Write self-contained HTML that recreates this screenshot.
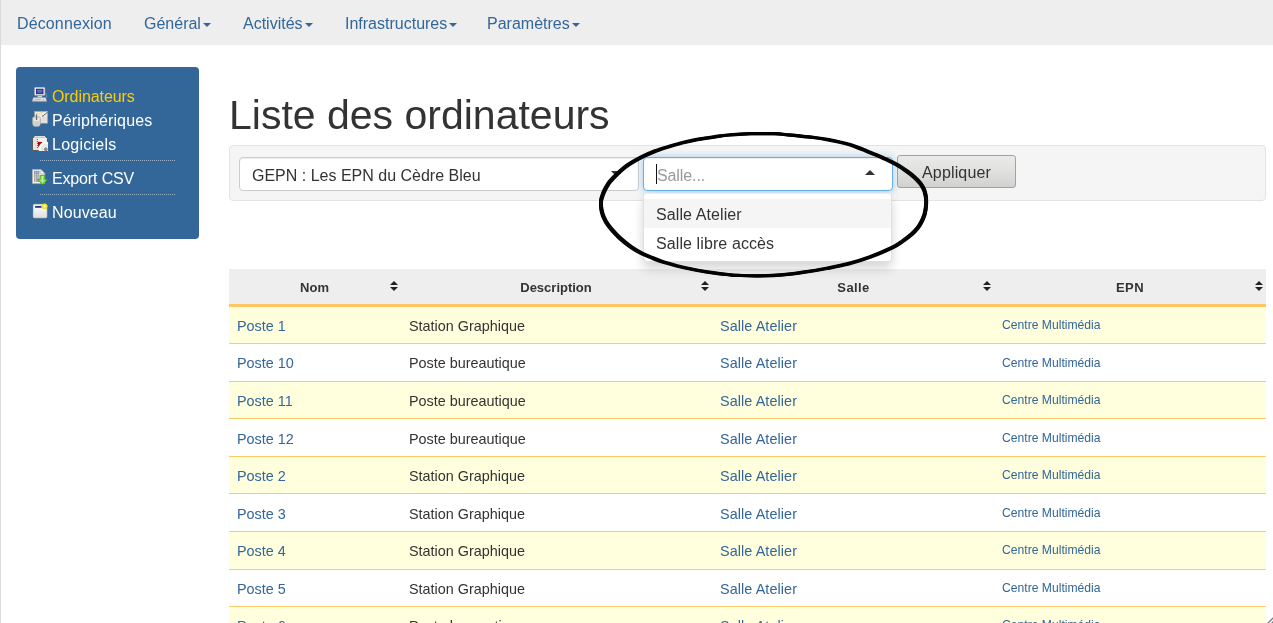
<!DOCTYPE html>
<html lang="fr">
<head>
<meta charset="utf-8">
<title>Liste des ordinateurs</title>
<style>
*{box-sizing:border-box}
html,body{margin:0;padding:0}
body{width:1273px;height:623px;overflow:hidden;position:relative;background:#fff;opacity:.999;
 font-family:"Liberation Sans",Arial,Helvetica,sans-serif;font-size:14px;color:#333}
a{text-decoration:none;color:#336699}
.edge{position:absolute;left:0;top:0;width:1px;height:623px;background:#dadada}
/* navbar */
.nav{position:absolute;left:1px;top:0;width:1272px;height:45px;background:#eee}
.nav a{position:absolute;top:14px;will-change:transform;font-size:16px;line-height:20px;color:#336699;white-space:nowrap}
.caret{display:inline-block;width:0;height:0;margin-left:2px;vertical-align:middle;
 border-top:4px solid #336699;border-left:4px solid transparent;border-right:4px solid transparent}
/* sidebar */
.side{position:absolute;left:16px;top:67px;width:183px;height:172px;background:#336699;border-radius:4px}
.side .it{position:absolute;left:36px;font-size:16px;line-height:20px;color:#fff;white-space:nowrap}
.side .it.on{color:#ffcc00}
.side .sep{position:absolute;left:24px;width:135px;height:0;border-top:1px dotted #9ab3cc}
.side svg{position:absolute;left:16px}
/* heading */
h1{position:absolute;left:229px;top:91px;margin:0;font-size:41px;line-height:48px;font-weight:normal;color:#333;white-space:nowrap}
/* filter well */
.well{position:absolute;left:229px;top:145px;width:1037px;height:56px;background:#f5f5f5;border:1px solid #e3e3e3;border-radius:4px}
.sel1{position:absolute;left:239px;top:157px;width:400px;height:34px;background:#fff;border:1px solid #ccc;border-radius:4px;box-shadow:inset 0 1px 1px rgba(0,0,0,.075);
 font-size:16px;line-height:32px;padding:2px 0 0 12px;color:#333;white-space:nowrap}
.sel2{position:absolute;left:643px;top:157px;width:250px;height:34px;background:#fff;border:1px solid #66afe9;border-radius:4px;
 box-shadow:inset 0 1px 1px rgba(0,0,0,.075),0 0 8px rgba(102,175,233,.6);font-size:16px;line-height:32px;padding:2px 0 0 13px;letter-spacing:-.1px;color:#999;white-space:nowrap}
.btn{position:absolute;left:897px;top:155px;width:119px;height:33px;border:1px solid #a3a29c;border-radius:3px;
 background:linear-gradient(#eaeae8,#e0e0de 50%,#d1d1cf);letter-spacing:.15px;font-size:16px;line-height:31px;padding:1px 0 0 0;text-align:center;color:#333}
.drop{position:absolute;left:643px;top:193px;width:249px;height:69px;background:#fff;border:1px solid rgba(0,0,0,.12);border-top:1px solid #eee;border-radius:4px;
 box-shadow:0 6px 12px rgba(0,0,0,.175)}
.drop div{height:29px;line-height:25px;padding:3px 0 0 12px;font-size:16px;color:#333;letter-spacing:.1px}
.drop div.act{background:#f5f5f5;margin-top:5px}
/* table */
.th{position:absolute;left:229px;top:269px;width:1037px;height:38px;background:#eee;border-bottom:3px solid #fdc662}
.th b{position:absolute;top:11px;font-size:13px;line-height:16px;color:#333;transform:translateX(-50%)}
.row{position:absolute;left:229px;width:1037px;height:38px;border-bottom:1px solid #fdca6a}
.row.y{background:#ffffdd}
.row span,.row a{position:absolute;top:11px;font-size:14.4px;line-height:17px;white-space:nowrap}
.row .c1{left:8px}.row .c2{left:180px;color:#333}.row .c3{left:491px;letter-spacing:.08px}.row .c4{left:773px;font-size:12.15px;top:10px}

.sort{position:absolute;top:12px;width:8px;height:11px}
.sort:before,.sort:after{content:"";position:absolute;left:0;width:0;height:0;border-left:4px solid transparent;border-right:4px solid transparent}
.sort:before{top:0;border-bottom:4px solid #222}
.sort:after{top:6px;border-top:4px solid #222}
.cur{position:absolute;left:656px;top:164px;width:1px;height:20px;background:#111}
.dn{position:absolute;left:611px;top:171px;width:0;height:0;border-top:5px solid #333;border-left:5px solid transparent;border-right:5px solid transparent}
.up{position:absolute;left:865px;top:170px;width:0;height:0;border-bottom:5px solid #333;border-left:5px solid transparent;border-right:5px solid transparent}
.anno{position:absolute;left:580px;top:120px;width:370px;height:170px;pointer-events:none}
.grip{position:absolute;left:1261px;top:611px;width:12px;height:12px}
</style>
</head>
<body>
<div class="edge"></div>
<div class="nav">
 <a style="left:16px;letter-spacing:.13px">Déconnexion</a>
 <a style="left:143px">Général<i class="caret"></i></a>
 <a style="left:242px">Activités<i class="caret"></i></a>
 <a style="left:344px">Infrastructures<i class="caret"></i></a>
 <a style="left:486px">Paramètres<i class="caret"></i></a>
</div>

<div class="side">
 <svg style="top:20px" width="16" height="16" viewBox="0 0 16 16">
  <path d="M13.2 5.8 Q15.2 7.6 14.7 10.6" fill="none" stroke="#9a9a9a" stroke-width=".7"/>
  <rect x="2.5" y=".3" width="10.4" height="8.3" rx="1" fill="#f3f3f3" stroke="#a3a3a3" stroke-width=".5"/><path d="M3 8.4h9.4" stroke="#8a8a8a" stroke-width=".6"/>
  <rect x="4.4" y="2.2" width="6.6" height="4.5" fill="#4563a6" stroke="#1b1b8f" stroke-width=".9"/>
  <path d="M5.2 3.2h5v1.2h-5z" fill="#6d86b8" opacity=".7"/>
  <rect x="5.6" y="8.8" width="4.4" height="1.5" fill="#dcdcdc"/>
  <path d="M1.4 10.4h12.2l1.3 4.3h-14.9z" fill="#e8e8e8" stroke="#8e8e8e" stroke-width=".5"/>
  <path d="M2.6 12.4h6.2M10.6 12.4h1.6" stroke="#9c9c9c" stroke-width=".8"/>
  <path d="M.2 14.3h14.6" stroke="#7d7d7d" stroke-width=".7"/>
 </svg>
 <svg style="top:44px" width="16" height="16" viewBox="0 0 16 16">
  <rect x="2.6" y=".4" width="13" height="11.8" fill="#ebeae4" stroke="#aaa390" stroke-width=".7"/>
  <path d="M9.5 6.2h5.4M9.5 8h5.4M9.5 9.8h5.4M3.6 2.8h5" stroke="#d3d0c4" stroke-width=".7"/>
  <circle cx="9.4" cy="1.4" r=".9" fill="#f1dc3c"/>
  <path d="M15.5 .9 L10.3 5.2" stroke="#5f5f5f" stroke-width="1.2"/>
  <path d="M15.1 .5 L10.6 4.2" stroke="#fbfbfb" stroke-width="1"/>
  <path d="M.6 7.4 Q.6 5.8 2.4 5.8 H6.6 Q8.4 5.8 8.4 7.4 V12.4 Q8.4 15.6 4.5 15.6 Q.6 15.6 .6 12.4 Z" fill="#e4e4e4" stroke="#a79f8f" stroke-width=".7"/>
  <path d="M1.1 10.2h6.8v2.2q0 2.7-3.4 2.7t-3.4-2.7z" fill="#cfcfcf"/>
  <path d="M4.5 3.8 V8.4" stroke="#6f6f6f" stroke-width="1.3" stroke-linecap="round"/>
 </svg>
 <svg style="top:68px" width="16" height="16" viewBox="0 0 16 16">
  <path d="M.6 3.4 L2.8 .6 H12.6 L15.4 3.4 V15.4 H.6 Z" fill="#f3f3f3" stroke="#5b534a" stroke-width="1"/>
  <path d="M2.9 1.2h9.5l1.5 1.5h-12.2z" fill="#dcdcdc"/>
  <path d="M2.4 2.6h11.2" stroke="#b3b3b3" stroke-width=".6"/>
  <path d="M1.2 3.6h3.6v11.3h-3.6z" fill="#e3e3e3"/>
  <path d="M5.4 4.1v9.2" stroke="#3c3c3c" stroke-width=".9" stroke-dasharray="1 1"/>
  <path d="M5.8 6.8 L10.6 7 L6.3 12.4 Z" fill="#b30303"/>
  <circle cx="13.9" cy="13.9" r="7.3" fill="#fbfbfb"/>
  <circle cx="13.9" cy="13.9" r="4.9" fill="#e6e6e6"/>
  <circle cx="13.9" cy="13.9" r="3.1" fill="#f3f3f3"/>
  <path d="M15.6 3.8 V6.6" stroke="#5b534a" stroke-width=".9"/>
  <circle cx="13.8" cy="14.3" r="1.5" fill="#e9e9e9" stroke="#4f4f4f" stroke-width=".7"/>
  <circle cx="13.8" cy="14.3" r=".8" fill="#d4213f"/>
 </svg>
 <svg style="top:102px" width="16" height="16" viewBox="0 0 16 16">
  <path d="M.5 .5 H8.8 L12.8 4.5 V14.6 H.5 Z" fill="#efeeea" stroke="#b9b29e" stroke-width=".7"/>
  <path d="M8.8 .5 V4.5 H12.8 Z" fill="#fafafa" stroke="#b6ae98" stroke-width=".6"/>
  <rect x="2.1" y="1.9" width="5.2" height="11" fill="#a3a3a3"/>
  <rect x="2.1" y="1.9" width="5.2" height="2.5" fill="#7b9bcb"/>
  <path d="M3 2.7h1.3v1h-1.3zM5.2 2.7h1.3v1h-1.3z" fill="#b7cbe8"/>
  <path d="M3.1 5.3h1v1h-1zM5.4 5.3h1v1h-1zM3.1 7.4h1v1h-1zM5.4 7.4h1v1h-1zM3.1 9.4h1v1h-1zM5.4 9.4h1v1h-1zM3.1 11.4h1v1h-1z" fill="#f4f4f4"/>
  <path d="M8.2 6.3 H12.8 V10.4 H15.6 L10.5 15.7 L5.6 10.4 H8.2 Z" fill="#8fe264" stroke="#3a9d1a" stroke-width=".8" stroke-linejoin="round"/>
  <path d="M10.4 7.2v6" stroke="#c6f7ab" stroke-width="1.2"/>
 </svg>
 <svg style="top:136px" width="16" height="16" viewBox="0 0 16 16">
  <defs><linearGradient id="gw" x1="0" y1="0" x2="0" y2="1"><stop offset="0" stop-color="#ffffff"/><stop offset="1" stop-color="#dedede"/></linearGradient>
  <radialGradient id="gy"><stop offset="0" stop-color="#ffffff"/><stop offset=".3" stop-color="#fbf59a"/><stop offset=".55" stop-color="#f1e425"/><stop offset="1" stop-color="#efe11c"/></radialGradient></defs>
  <path d="M2 15.5h12" stroke="#26507c" stroke-width="1" opacity=".6"/>
  <rect x="1.4" y="1.4" width="13.4" height="13.4" rx="1" fill="url(#gw)" stroke="#e9e1c8" stroke-width=".8"/>
  <rect x="3.1" y="2.9" width="6.6" height="1.9" fill="#1b3c8c"/>
  <circle cx="12.5" cy="3.3" r="2.9" fill="url(#gy)"/>
 </svg>
 <div class="it on" style="top:20px;letter-spacing:-.08px">Ordinateurs</div>
 <div class="it" style="top:44px;letter-spacing:.12px">Périphériques</div>
 <div class="it" style="top:68px;letter-spacing:.25px">Logiciels</div>
 <div class="sep" style="top:93px"></div>
 <div class="it" style="top:102px;letter-spacing:-.15px">Export CSV</div>
 <div class="sep" style="top:127px"></div>
 <div class="it" style="top:136px;letter-spacing:.12px">Nouveau</div>
</div>

<h1>Liste des ordinateurs</h1>

<div class="well"></div>
<div class="sel1">GEPN : Les EPN du Cèdre Bleu</div>
<div class="sel2">Salle...</div>
<div class="btn">Appliquer</div>

<div class="th">
 <b style="left:85.5px">Nom</b>
 <b style="left:327px">Description</b>
 <b style="left:624.5px;letter-spacing:.4px">Salle</b>
 <b style="left:901px;letter-spacing:.5px">EPN</b>
 <i class="sort" style="left:161px"></i><i class="sort" style="left:472px"></i><i class="sort" style="left:754px"></i><i class="sort" style="left:1026px"></i>
</div>
<div id="rows">
<div class="row y" style="top:307px;height:37px"><a class="c1">Poste 1</a><span class="c2">Station Graphique</span><a class="c3">Salle Atelier</a><a class="c4">Centre Multimédia</a></div>
<div class="row" style="top:344px;height:38px"><a class="c1">Poste 10</a><span class="c2">Poste bureautique</span><a class="c3">Salle Atelier</a><a class="c4" style="top:11px">Centre Multimédia</a></div>
<div class="row y" style="top:382px;height:37px"><a class="c1">Poste 11</a><span class="c2">Poste bureautique</span><a class="c3">Salle Atelier</a><a class="c4">Centre Multimédia</a></div>
<div class="row" style="top:419px;height:38px"><a class="c1" style="top:12px">Poste 12</a><span class="c2" style="top:12px">Poste bureautique</span><a class="c3" style="top:12px">Salle Atelier</a><a class="c4" style="top:11px">Centre Multimédia</a></div>
<div class="row y" style="top:457px;height:37px"><a class="c1">Poste 2</a><span class="c2">Station Graphique</span><a class="c3">Salle Atelier</a><a class="c4">Centre Multimédia</a></div>
<div class="row" style="top:494px;height:38px"><a class="c1" style="top:12px">Poste 3</a><span class="c2" style="top:12px">Station Graphique</span><a class="c3" style="top:12px">Salle Atelier</a><a class="c4" style="top:11px">Centre Multimédia</a></div>
<div class="row y" style="top:532px;height:38px"><a class="c1">Poste 4</a><span class="c2">Station Graphique</span><a class="c3">Salle Atelier</a><a class="c4">Centre Multimédia</a></div>
<div class="row" style="top:570px;height:37px"><a class="c1">Poste 5</a><span class="c2">Station Graphique</span><a class="c3">Salle Atelier</a><a class="c4">Centre Multimédia</a></div>
<div class="row y" style="top:607px;height:38px"><a class="c1">Poste 6</a><span class="c2">Poste bureautique</span><a class="c3">Salle Atelier</a><a class="c4">Centre Multimédia</a></div>
</div>

<div class="dn"></div><div class="up"></div><div class="cur"></div>
<div class="drop"><div class="act">Salle Atelier</div><div>Salle libre accès</div></div>
<svg class="anno" viewBox="580 120 370 170">
 <g fill="none" stroke="#000" stroke-width="1.5" stroke-linejoin="round">
  <path transform="translate(-1.2 -0.85)" d="M601.0 202.0C601.0 201.0 601.0 200.6 601.3 199.4C601.6 198.2 602.2 196.2 602.8 194.6C603.4 193.0 604.1 191.4 604.9 189.8C605.7 188.2 606.8 186.3 607.6 185.0C608.4 183.7 608.4 183.5 609.9 181.7C611.4 179.9 614.4 176.8 616.8 174.4C619.2 172.1 622.0 169.5 624.4 167.6C626.8 165.7 627.9 164.8 631.0 163.0C634.1 161.2 638.7 158.6 642.8 156.6C646.9 154.6 651.4 152.6 655.7 150.9C660.0 149.2 664.2 148.0 668.5 146.7C672.8 145.4 677.1 144.1 681.4 143.0C685.7 141.9 689.8 140.9 694.2 140.1C698.6 139.2 703.8 138.6 708.0 137.9C712.2 137.2 715.8 136.6 719.3 136.1C722.8 135.6 725.7 135.3 728.9 135.0C732.1 134.7 735.0 134.5 738.5 134.3C742.0 134.1 746.1 133.8 750.0 133.7C753.9 133.6 757.8 133.6 762.0 133.6C766.2 133.6 770.7 133.5 775.0 133.7C779.3 133.9 783.5 134.4 787.8 134.8C792.1 135.2 796.4 135.7 800.7 136.1C805.0 136.5 809.2 136.9 813.5 137.5C817.8 138.1 822.1 138.7 826.4 139.4C830.7 140.2 835.1 141.1 839.2 142.0C843.3 142.9 847.1 143.8 851.0 145.0C854.9 146.2 858.7 147.9 862.8 149.5C866.9 151.1 871.4 153.0 875.7 154.8C880.0 156.7 884.6 158.7 888.5 160.6C892.4 162.5 896.0 164.3 899.0 166.0C902.0 167.7 904.0 169.2 906.5 171.0C909.0 172.8 911.7 174.8 914.0 176.8C916.3 178.8 918.5 181.1 920.2 183.2C921.9 185.3 923.1 187.5 924.0 189.6C924.9 191.7 925.3 193.6 925.7 195.7C926.1 197.8 926.2 200.0 926.2 202.1C926.2 204.2 926.0 206.4 925.7 208.5C925.4 210.6 925.1 212.8 924.4 214.9C923.7 217.1 922.8 219.2 921.7 221.4C920.6 223.6 919.4 225.7 917.8 227.8C916.1 229.9 914.2 232.1 911.8 234.2C909.4 236.3 906.6 238.4 903.4 240.6C900.2 242.8 898.0 244.8 892.4 247.5C886.8 250.2 877.4 254.3 870.0 257.0C862.6 259.7 855.3 262.0 848.0 263.9C840.7 265.8 833.3 267.1 826.0 268.5C818.7 269.9 811.3 271.1 804.0 272.1C796.7 273.2 789.3 274.2 782.0 274.8C774.7 275.4 766.8 275.7 760.0 275.8C753.2 275.9 746.0 275.7 741.0 275.5C736.0 275.3 735.5 275.4 730.0 274.8C724.5 274.2 715.3 273.2 708.0 272.1C700.7 271.0 693.3 269.6 686.0 268.0C678.7 266.4 669.5 263.8 664.0 262.2C658.5 260.6 656.7 259.6 653.0 258.1C649.3 256.6 645.7 255.2 642.0 253.4C638.3 251.6 634.7 249.6 631.0 247.0C627.3 244.4 622.8 240.7 619.8 238.0C616.8 235.3 614.7 233.0 612.7 230.7C610.7 228.4 609.1 226.5 607.6 224.3C606.1 222.2 605.0 220.0 604.0 217.8C603.0 215.7 602.3 213.5 601.8 211.4C601.3 209.3 601.1 207.1 601.0 205.5C600.9 203.9 601.0 203.0 601.0 202.0Z"/>
  <path transform="translate(1.2 -0.85)" d="M601.0 202.0C601.0 201.0 601.0 200.6 601.3 199.4C601.6 198.2 602.2 196.2 602.8 194.6C603.4 193.0 604.1 191.4 604.9 189.8C605.7 188.2 606.8 186.3 607.6 185.0C608.4 183.7 608.4 183.5 609.9 181.7C611.4 179.9 614.4 176.8 616.8 174.4C619.2 172.1 622.0 169.5 624.4 167.6C626.8 165.7 627.9 164.8 631.0 163.0C634.1 161.2 638.7 158.6 642.8 156.6C646.9 154.6 651.4 152.6 655.7 150.9C660.0 149.2 664.2 148.0 668.5 146.7C672.8 145.4 677.1 144.1 681.4 143.0C685.7 141.9 689.8 140.9 694.2 140.1C698.6 139.2 703.8 138.6 708.0 137.9C712.2 137.2 715.8 136.6 719.3 136.1C722.8 135.6 725.7 135.3 728.9 135.0C732.1 134.7 735.0 134.5 738.5 134.3C742.0 134.1 746.1 133.8 750.0 133.7C753.9 133.6 757.8 133.6 762.0 133.6C766.2 133.6 770.7 133.5 775.0 133.7C779.3 133.9 783.5 134.4 787.8 134.8C792.1 135.2 796.4 135.7 800.7 136.1C805.0 136.5 809.2 136.9 813.5 137.5C817.8 138.1 822.1 138.7 826.4 139.4C830.7 140.2 835.1 141.1 839.2 142.0C843.3 142.9 847.1 143.8 851.0 145.0C854.9 146.2 858.7 147.9 862.8 149.5C866.9 151.1 871.4 153.0 875.7 154.8C880.0 156.7 884.6 158.7 888.5 160.6C892.4 162.5 896.0 164.3 899.0 166.0C902.0 167.7 904.0 169.2 906.5 171.0C909.0 172.8 911.7 174.8 914.0 176.8C916.3 178.8 918.5 181.1 920.2 183.2C921.9 185.3 923.1 187.5 924.0 189.6C924.9 191.7 925.3 193.6 925.7 195.7C926.1 197.8 926.2 200.0 926.2 202.1C926.2 204.2 926.0 206.4 925.7 208.5C925.4 210.6 925.1 212.8 924.4 214.9C923.7 217.1 922.8 219.2 921.7 221.4C920.6 223.6 919.4 225.7 917.8 227.8C916.1 229.9 914.2 232.1 911.8 234.2C909.4 236.3 906.6 238.4 903.4 240.6C900.2 242.8 898.0 244.8 892.4 247.5C886.8 250.2 877.4 254.3 870.0 257.0C862.6 259.7 855.3 262.0 848.0 263.9C840.7 265.8 833.3 267.1 826.0 268.5C818.7 269.9 811.3 271.1 804.0 272.1C796.7 273.2 789.3 274.2 782.0 274.8C774.7 275.4 766.8 275.7 760.0 275.8C753.2 275.9 746.0 275.7 741.0 275.5C736.0 275.3 735.5 275.4 730.0 274.8C724.5 274.2 715.3 273.2 708.0 272.1C700.7 271.0 693.3 269.6 686.0 268.0C678.7 266.4 669.5 263.8 664.0 262.2C658.5 260.6 656.7 259.6 653.0 258.1C649.3 256.6 645.7 255.2 642.0 253.4C638.3 251.6 634.7 249.6 631.0 247.0C627.3 244.4 622.8 240.7 619.8 238.0C616.8 235.3 614.7 233.0 612.7 230.7C610.7 228.4 609.1 226.5 607.6 224.3C606.1 222.2 605.0 220.0 604.0 217.8C603.0 215.7 602.3 213.5 601.8 211.4C601.3 209.3 601.1 207.1 601.0 205.5C600.9 203.9 601.0 203.0 601.0 202.0Z"/>
  <path transform="translate(-1.2 0.85)" d="M601.0 202.0C601.0 201.0 601.0 200.6 601.3 199.4C601.6 198.2 602.2 196.2 602.8 194.6C603.4 193.0 604.1 191.4 604.9 189.8C605.7 188.2 606.8 186.3 607.6 185.0C608.4 183.7 608.4 183.5 609.9 181.7C611.4 179.9 614.4 176.8 616.8 174.4C619.2 172.1 622.0 169.5 624.4 167.6C626.8 165.7 627.9 164.8 631.0 163.0C634.1 161.2 638.7 158.6 642.8 156.6C646.9 154.6 651.4 152.6 655.7 150.9C660.0 149.2 664.2 148.0 668.5 146.7C672.8 145.4 677.1 144.1 681.4 143.0C685.7 141.9 689.8 140.9 694.2 140.1C698.6 139.2 703.8 138.6 708.0 137.9C712.2 137.2 715.8 136.6 719.3 136.1C722.8 135.6 725.7 135.3 728.9 135.0C732.1 134.7 735.0 134.5 738.5 134.3C742.0 134.1 746.1 133.8 750.0 133.7C753.9 133.6 757.8 133.6 762.0 133.6C766.2 133.6 770.7 133.5 775.0 133.7C779.3 133.9 783.5 134.4 787.8 134.8C792.1 135.2 796.4 135.7 800.7 136.1C805.0 136.5 809.2 136.9 813.5 137.5C817.8 138.1 822.1 138.7 826.4 139.4C830.7 140.2 835.1 141.1 839.2 142.0C843.3 142.9 847.1 143.8 851.0 145.0C854.9 146.2 858.7 147.9 862.8 149.5C866.9 151.1 871.4 153.0 875.7 154.8C880.0 156.7 884.6 158.7 888.5 160.6C892.4 162.5 896.0 164.3 899.0 166.0C902.0 167.7 904.0 169.2 906.5 171.0C909.0 172.8 911.7 174.8 914.0 176.8C916.3 178.8 918.5 181.1 920.2 183.2C921.9 185.3 923.1 187.5 924.0 189.6C924.9 191.7 925.3 193.6 925.7 195.7C926.1 197.8 926.2 200.0 926.2 202.1C926.2 204.2 926.0 206.4 925.7 208.5C925.4 210.6 925.1 212.8 924.4 214.9C923.7 217.1 922.8 219.2 921.7 221.4C920.6 223.6 919.4 225.7 917.8 227.8C916.1 229.9 914.2 232.1 911.8 234.2C909.4 236.3 906.6 238.4 903.4 240.6C900.2 242.8 898.0 244.8 892.4 247.5C886.8 250.2 877.4 254.3 870.0 257.0C862.6 259.7 855.3 262.0 848.0 263.9C840.7 265.8 833.3 267.1 826.0 268.5C818.7 269.9 811.3 271.1 804.0 272.1C796.7 273.2 789.3 274.2 782.0 274.8C774.7 275.4 766.8 275.7 760.0 275.8C753.2 275.9 746.0 275.7 741.0 275.5C736.0 275.3 735.5 275.4 730.0 274.8C724.5 274.2 715.3 273.2 708.0 272.1C700.7 271.0 693.3 269.6 686.0 268.0C678.7 266.4 669.5 263.8 664.0 262.2C658.5 260.6 656.7 259.6 653.0 258.1C649.3 256.6 645.7 255.2 642.0 253.4C638.3 251.6 634.7 249.6 631.0 247.0C627.3 244.4 622.8 240.7 619.8 238.0C616.8 235.3 614.7 233.0 612.7 230.7C610.7 228.4 609.1 226.5 607.6 224.3C606.1 222.2 605.0 220.0 604.0 217.8C603.0 215.7 602.3 213.5 601.8 211.4C601.3 209.3 601.1 207.1 601.0 205.5C600.9 203.9 601.0 203.0 601.0 202.0Z"/>
  <path transform="translate(1.2 0.85)" d="M601.0 202.0C601.0 201.0 601.0 200.6 601.3 199.4C601.6 198.2 602.2 196.2 602.8 194.6C603.4 193.0 604.1 191.4 604.9 189.8C605.7 188.2 606.8 186.3 607.6 185.0C608.4 183.7 608.4 183.5 609.9 181.7C611.4 179.9 614.4 176.8 616.8 174.4C619.2 172.1 622.0 169.5 624.4 167.6C626.8 165.7 627.9 164.8 631.0 163.0C634.1 161.2 638.7 158.6 642.8 156.6C646.9 154.6 651.4 152.6 655.7 150.9C660.0 149.2 664.2 148.0 668.5 146.7C672.8 145.4 677.1 144.1 681.4 143.0C685.7 141.9 689.8 140.9 694.2 140.1C698.6 139.2 703.8 138.6 708.0 137.9C712.2 137.2 715.8 136.6 719.3 136.1C722.8 135.6 725.7 135.3 728.9 135.0C732.1 134.7 735.0 134.5 738.5 134.3C742.0 134.1 746.1 133.8 750.0 133.7C753.9 133.6 757.8 133.6 762.0 133.6C766.2 133.6 770.7 133.5 775.0 133.7C779.3 133.9 783.5 134.4 787.8 134.8C792.1 135.2 796.4 135.7 800.7 136.1C805.0 136.5 809.2 136.9 813.5 137.5C817.8 138.1 822.1 138.7 826.4 139.4C830.7 140.2 835.1 141.1 839.2 142.0C843.3 142.9 847.1 143.8 851.0 145.0C854.9 146.2 858.7 147.9 862.8 149.5C866.9 151.1 871.4 153.0 875.7 154.8C880.0 156.7 884.6 158.7 888.5 160.6C892.4 162.5 896.0 164.3 899.0 166.0C902.0 167.7 904.0 169.2 906.5 171.0C909.0 172.8 911.7 174.8 914.0 176.8C916.3 178.8 918.5 181.1 920.2 183.2C921.9 185.3 923.1 187.5 924.0 189.6C924.9 191.7 925.3 193.6 925.7 195.7C926.1 197.8 926.2 200.0 926.2 202.1C926.2 204.2 926.0 206.4 925.7 208.5C925.4 210.6 925.1 212.8 924.4 214.9C923.7 217.1 922.8 219.2 921.7 221.4C920.6 223.6 919.4 225.7 917.8 227.8C916.1 229.9 914.2 232.1 911.8 234.2C909.4 236.3 906.6 238.4 903.4 240.6C900.2 242.8 898.0 244.8 892.4 247.5C886.8 250.2 877.4 254.3 870.0 257.0C862.6 259.7 855.3 262.0 848.0 263.9C840.7 265.8 833.3 267.1 826.0 268.5C818.7 269.9 811.3 271.1 804.0 272.1C796.7 273.2 789.3 274.2 782.0 274.8C774.7 275.4 766.8 275.7 760.0 275.8C753.2 275.9 746.0 275.7 741.0 275.5C736.0 275.3 735.5 275.4 730.0 274.8C724.5 274.2 715.3 273.2 708.0 272.1C700.7 271.0 693.3 269.6 686.0 268.0C678.7 266.4 669.5 263.8 664.0 262.2C658.5 260.6 656.7 259.6 653.0 258.1C649.3 256.6 645.7 255.2 642.0 253.4C638.3 251.6 634.7 249.6 631.0 247.0C627.3 244.4 622.8 240.7 619.8 238.0C616.8 235.3 614.7 233.0 612.7 230.7C610.7 228.4 609.1 226.5 607.6 224.3C606.1 222.2 605.0 220.0 604.0 217.8C603.0 215.7 602.3 213.5 601.8 211.4C601.3 209.3 601.1 207.1 601.0 205.5C600.9 203.9 601.0 203.0 601.0 202.0Z"/>
  <path transform="translate(0 0)" d="M601.0 202.0C601.0 201.0 601.0 200.6 601.3 199.4C601.6 198.2 602.2 196.2 602.8 194.6C603.4 193.0 604.1 191.4 604.9 189.8C605.7 188.2 606.8 186.3 607.6 185.0C608.4 183.7 608.4 183.5 609.9 181.7C611.4 179.9 614.4 176.8 616.8 174.4C619.2 172.1 622.0 169.5 624.4 167.6C626.8 165.7 627.9 164.8 631.0 163.0C634.1 161.2 638.7 158.6 642.8 156.6C646.9 154.6 651.4 152.6 655.7 150.9C660.0 149.2 664.2 148.0 668.5 146.7C672.8 145.4 677.1 144.1 681.4 143.0C685.7 141.9 689.8 140.9 694.2 140.1C698.6 139.2 703.8 138.6 708.0 137.9C712.2 137.2 715.8 136.6 719.3 136.1C722.8 135.6 725.7 135.3 728.9 135.0C732.1 134.7 735.0 134.5 738.5 134.3C742.0 134.1 746.1 133.8 750.0 133.7C753.9 133.6 757.8 133.6 762.0 133.6C766.2 133.6 770.7 133.5 775.0 133.7C779.3 133.9 783.5 134.4 787.8 134.8C792.1 135.2 796.4 135.7 800.7 136.1C805.0 136.5 809.2 136.9 813.5 137.5C817.8 138.1 822.1 138.7 826.4 139.4C830.7 140.2 835.1 141.1 839.2 142.0C843.3 142.9 847.1 143.8 851.0 145.0C854.9 146.2 858.7 147.9 862.8 149.5C866.9 151.1 871.4 153.0 875.7 154.8C880.0 156.7 884.6 158.7 888.5 160.6C892.4 162.5 896.0 164.3 899.0 166.0C902.0 167.7 904.0 169.2 906.5 171.0C909.0 172.8 911.7 174.8 914.0 176.8C916.3 178.8 918.5 181.1 920.2 183.2C921.9 185.3 923.1 187.5 924.0 189.6C924.9 191.7 925.3 193.6 925.7 195.7C926.1 197.8 926.2 200.0 926.2 202.1C926.2 204.2 926.0 206.4 925.7 208.5C925.4 210.6 925.1 212.8 924.4 214.9C923.7 217.1 922.8 219.2 921.7 221.4C920.6 223.6 919.4 225.7 917.8 227.8C916.1 229.9 914.2 232.1 911.8 234.2C909.4 236.3 906.6 238.4 903.4 240.6C900.2 242.8 898.0 244.8 892.4 247.5C886.8 250.2 877.4 254.3 870.0 257.0C862.6 259.7 855.3 262.0 848.0 263.9C840.7 265.8 833.3 267.1 826.0 268.5C818.7 269.9 811.3 271.1 804.0 272.1C796.7 273.2 789.3 274.2 782.0 274.8C774.7 275.4 766.8 275.7 760.0 275.8C753.2 275.9 746.0 275.7 741.0 275.5C736.0 275.3 735.5 275.4 730.0 274.8C724.5 274.2 715.3 273.2 708.0 272.1C700.7 271.0 693.3 269.6 686.0 268.0C678.7 266.4 669.5 263.8 664.0 262.2C658.5 260.6 656.7 259.6 653.0 258.1C649.3 256.6 645.7 255.2 642.0 253.4C638.3 251.6 634.7 249.6 631.0 247.0C627.3 244.4 622.8 240.7 619.8 238.0C616.8 235.3 614.7 233.0 612.7 230.7C610.7 228.4 609.1 226.5 607.6 224.3C606.1 222.2 605.0 220.0 604.0 217.8C603.0 215.7 602.3 213.5 601.8 211.4C601.3 209.3 601.1 207.1 601.0 205.5C600.9 203.9 601.0 203.0 601.0 202.0Z"/>
 </g>
</svg>
<svg class="grip" viewBox="0 0 12 12"><path d="M6.6 12.4 L12.4 6.6 M10.4 12.4 L12.4 10.4" stroke="#7c7c7c" stroke-width="1.3" fill="none"/></svg>
</body>
</html>
